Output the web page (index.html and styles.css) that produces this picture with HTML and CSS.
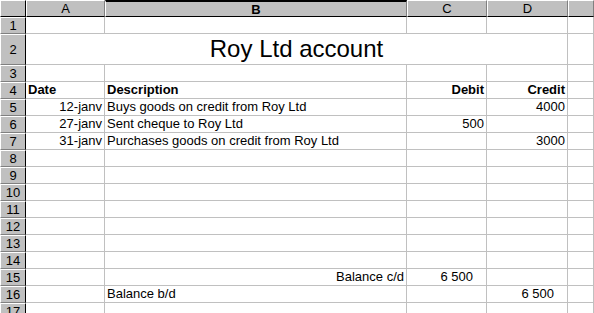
FILE: index.html
```html
<!DOCTYPE html>
<html lang="fr">
<head>
  <meta charset="UTF-8" />
  <title>Roy Ltd account</title>
  <link rel="stylesheet" href="styles.css">
</head>
<body>

  <div class="sheet">
    <!-- en-tête des colonnes -->
    <div class="hd corner"></div>
    <div class="hd col">A</div>
    <div class="hd col col-active">B</div>
    <div class="hd col">C</div>
    <div class="hd col">D</div>
    <div class="hd col"></div>

    <div class="hd row">1</div>
    <div class="cell"></div><div class="cell"></div><div class="cell"></div><div class="cell"></div><div class="cell"></div>

    <div class="hd row">2</div>
    <div class="cell title">Roy Ltd account</div>
    <div class="cell"></div>

    <div class="hd row">3</div>
    <div class="cell"></div><div class="cell"></div><div class="cell"></div><div class="cell"></div><div class="cell"></div>

    <div class="hd row">4</div>
    <div class="cell bold">Date</div>
    <div class="cell bold">Description</div>
    <div class="cell bold num">Debit</div>
    <div class="cell bold num">Credit</div>
    <div class="cell"></div>

    <div class="hd row">5</div>
    <div class="cell num">12-janv</div>
    <div class="cell">Buys goods on credit from Roy Ltd</div>
    <div class="cell num"></div>
    <div class="cell num">4000</div>
    <div class="cell"></div>

    <div class="hd row">6</div>
    <div class="cell num">27-janv</div>
    <div class="cell">Sent cheque to Roy Ltd</div>
    <div class="cell num">500</div>
    <div class="cell num"></div>
    <div class="cell"></div>

    <div class="hd row">7</div>
    <div class="cell num">31-janv</div>
    <div class="cell">Purchases goods on credit from Roy Ltd</div>
    <div class="cell num"></div>
    <div class="cell num">3000</div>
    <div class="cell"></div>

    <div class="hd row">8</div>
    <div class="cell"></div><div class="cell"></div><div class="cell"></div><div class="cell"></div><div class="cell"></div>
    <div class="hd row">9</div>
    <div class="cell"></div><div class="cell"></div><div class="cell"></div><div class="cell"></div><div class="cell"></div>
    <div class="hd row">10</div>
    <div class="cell"></div><div class="cell"></div><div class="cell"></div><div class="cell"></div><div class="cell"></div>
    <div class="hd row">11</div>
    <div class="cell"></div><div class="cell"></div><div class="cell"></div><div class="cell"></div><div class="cell"></div>
    <div class="hd row">12</div>
    <div class="cell"></div><div class="cell"></div><div class="cell"></div><div class="cell"></div><div class="cell"></div>
    <div class="hd row">13</div>
    <div class="cell"></div><div class="cell"></div><div class="cell"></div><div class="cell"></div><div class="cell"></div>
    <div class="hd row">14</div>
    <div class="cell"></div><div class="cell"></div><div class="cell"></div><div class="cell"></div><div class="cell"></div>

    <div class="hd row">15</div>
    <div class="cell"></div>
    <div class="cell num">Balance c/d</div>
    <div class="cell num acct">6 500</div>
    <div class="cell"></div>
    <div class="cell"></div>

    <div class="hd row">16</div>
    <div class="cell"></div>
    <div class="cell">Balance b/d</div>
    <div class="cell"></div>
    <div class="cell num acct">6 500</div>
    <div class="cell"></div>

    <div class="hd row">17</div>
    <div class="cell"></div><div class="cell"></div><div class="cell"></div><div class="cell"></div><div class="cell"></div>
  </div>

</body>
</html>
```

FILE: styles.css
```css
/* Feuille façon tableur */
body {
  margin: 0;
  background-color: #ffffff;
  font-family: "Liberation Sans", Arial, sans-serif;
  font-size: 13px;
  color: #000000;
  overflow: hidden;
  height: 313px;
}

.sheet {
  display: grid;
  grid-template-columns: 26px 79px 302px 80px 81px 26px;
  grid-template-rows: 17px 17px 31px repeat(15, 17px);
}

/* Cellules */
.cell {
  box-sizing: border-box;
  border-right: 1px solid #c0c0c0;
  border-bottom: 1px solid #c0c0c0;
  padding: 0 2px 1px 2px;
  display: flex;
  align-items: flex-end;
  white-space: nowrap;
  overflow: hidden;
  line-height: 15px;
}

.num {
  justify-content: flex-end;
}

.acct {
  padding-right: 13px;
}

.bold {
  font-weight: bold;
}

/* Titre fusionné A:D */
.title {
  grid-column: span 4;
  justify-content: center;
  font-size: 24px;
  line-height: 26px;
  padding-bottom: 2px;
}

/* En-têtes gris en relief */
.hd {
  box-sizing: border-box;
  background-color: #c0c0c0;
  border-top: 1px solid #ffffff;
  border-left: 1px solid #ffffff;
  border-right: 1px solid #808080;
  border-bottom: 1px solid #808080;
  display: flex;
  align-items: center;
  justify-content: center;
  line-height: 15px;
}

.hd.col {
  border-bottom: 1px solid #000000;
}

.hd.corner {
  border-bottom: 1px solid #000000;
  border-right: 1px solid #000000;
}

.hd.row {
  border-right: 1px solid #000000;
}

.col-active {
  border-top: 2px solid #000000;
  font-weight: bold;
}
```
